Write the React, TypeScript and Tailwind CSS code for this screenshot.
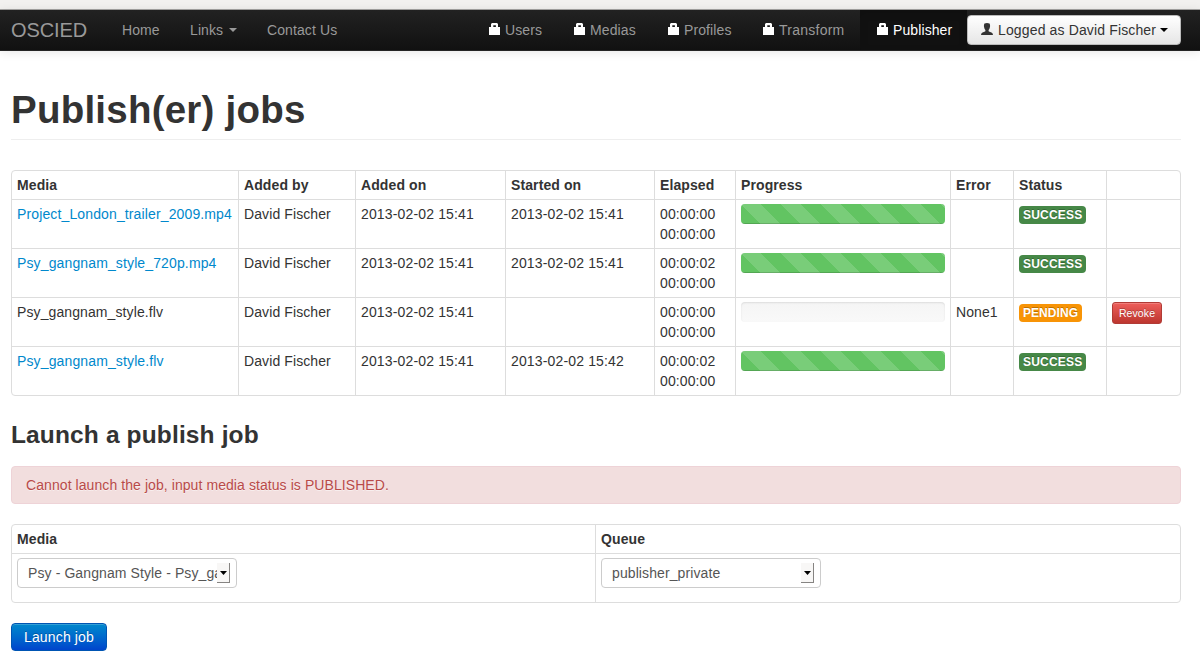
import React from "react";

type Job = {
  media: string;
  link: boolean;
  started: string;
  elapsed: string;
  done: boolean;
  error: string;
};

const jobs: Job[] = [
  { media: "Project_London_trailer_2009.mp4", link: true, started: "2013-02-02 15:41", elapsed: "00:00:00", done: true, error: "" },
  { media: "Psy_gangnam_style_720p.mp4", link: true, started: "2013-02-02 15:41", elapsed: "00:00:02", done: true, error: "" },
  { media: "Psy_gangnam_style.flv", link: false, started: "", elapsed: "00:00:00", done: false, error: "None1" },
  { media: "Psy_gangnam_style.flv", link: true, started: "2013-02-02 15:42", elapsed: "00:00:02", done: true, error: "" },
];

const headings = ["Media", "Added by", "Added on", "Started on", "Elapsed", "Progress", "Error", "Status", ""];
const columns = "grid grid-cols-[226px_117px_150px_149px_81px_215px_63px_93px_74px]";

function Lock() {
  return (
    <svg width="11" height="12" viewBox="0 0 11 12" className="block shrink-0">
      <path fill="#fff" d="M3 0H8L9 1V4H11V12H0V4H2V1ZM4.3 2.2V4H6.9V2.2Z" fillRule="evenodd" />
    </svg>
  );
}

function Person() {
  return (
    <svg width="12" height="12" viewBox="0 0 12 12" className="block shrink-0">
      <path fill="#333" d="M3.5 0.6Q6 -0.6 8.5 0.6Q9.4 2 8.9 4.2Q8.5 6.1 7.6 7V8.3Q8 8.9 10.5 9.4Q12 10 12 12H0Q0 10 1.5 9.4Q4 8.9 4.4 8.3V7Q3.5 6.1 3.1 4.2Q2.6 2 3.5 0.6Z" />
    </svg>
  );
}

function Caret({ color }: { color: string }) {
  return (
    <svg width="8" height="4" viewBox="0 0 8 4" className="block shrink-0">
      <path fill={color} d="M0 0H8L4 4Z" />
    </svg>
  );
}

function AdminLink({ label, width, active = false }: { label: string; width: string; active?: boolean }) {
  const tone = active ? "bg-[#111] text-white shadow-[inset_0_3px_8px_rgba(0,0,0,0.125)]" : "text-[#999]";
  return (
    <a className={`${tone} ${width} flex h-10 items-center gap-[5px] pl-[17px]`}>
      <span className="-mt-0.5"><Lock /></span>
      {label}
    </a>
  );
}

function Cell({ children, first = false }: { children?: React.ReactNode; first?: boolean }) {
  return <div className={first ? "whitespace-nowrap px-[5px] pt-1" : "whitespace-nowrap border-l border-[#ddd] px-[5px] pt-1"}>{children}</div>;
}

function Progress({ done }: { done: boolean }) {
  return (
    <div className="h-5 w-[204px] overflow-hidden rounded bg-linear-to-b from-[#f5f5f5] to-[#f9f9f9] shadow-[inset_0_1px_2px_rgba(0,0,0,0.1)]">
      {done && (
        <div className="h-full bg-[#62c462] bg-[linear-gradient(45deg,rgba(255,255,255,0.15)_25%,transparent_25%,transparent_50%,rgba(255,255,255,0.15)_50%,rgba(255,255,255,0.15)_75%,transparent_75%,transparent)] bg-size-[40px_40px] shadow-[inset_0_-1px_0_rgba(0,0,0,0.15)]" />
      )}
    </div>
  );
}

function Badge({ done }: { done: boolean }) {
  const tone = done ? "bg-[#468847] tracking-[0.2px] w-[67px]" : "bg-[#f89406] tracking-[0.05px] w-[63px]";
  return (
    <span className={`${tone} mt-0.5 block h-[18px] rounded pl-1 text-[12px] font-bold leading-[18px] text-white [text-shadow:0_-1px_0_rgba(0,0,0,0.25)]`}>
      {done ? "SUCCESS" : "PENDING"}
    </span>
  );
}

function Select({ value }: { value: string }) {
  return (
    <div className="flex h-[30px] w-[220px] items-center rounded border border-[#ccc] bg-white pl-2.5 pr-1.5 text-[#555]">
      <span className="min-w-0 flex-1 overflow-hidden whitespace-nowrap">{value}</span>
      <span className="flex h-5 w-[13px] shrink-0 items-center justify-center bg-[#f8f7f6] shadow-[inset_-1px_-1px_0_#868482]">
        <svg width="7" height="4" viewBox="0 0 7 4"><path d="M0 0H7L3.5 4Z" fill="#000" /></svg>
      </span>
    </div>
  );
}

export default function App() {
  return (
    <div className="h-[669px] w-[1200px] overflow-hidden bg-white font-['Liberation_Sans',Arial,sans-serif] text-[14px] leading-5 tracking-[0.1px] text-[#333]">
      <div className="h-[10px] border-b border-[#a5a4a2] bg-[#f2f1ef]" />
      <nav className="flex h-[41px] justify-between border-b border-[#252525] bg-linear-to-b from-[#222] to-[#111] pl-[11px] pr-[19px] shadow-[0_1px_10px_rgba(0,0,0,0.1)]">
        <div className="flex h-10 items-center text-[#999]">
          <a className="w-[96px] text-[20px] tracking-[-0.1px]">OSCIED</a>
          <a className="w-[68px] pl-[15px]">Home</a>
          <a className="flex w-[62px] items-center justify-between pl-[15px]">
            Links<Caret color="#999" />
          </a>
          <a className="ml-[15px] pl-[15px]">Contact Us</a>
        </div>
        <div className="flex">
          <AdminLink label="Users" width="w-[85px]" />
          <AdminLink label="Medias" width="w-[94px]" />
          <AdminLink label="Profiles" width="w-[95px]" />
          <AdminLink label="Transform" width="w-[114px] tracking-[0.25px]" />
          <AdminLink label="Publisher" width="w-[107px]" active />
          <button className="mt-[5px] flex h-[30px] w-[214px] items-center rounded border border-[#bbb] bg-linear-to-b from-white to-[#e6e6e6] pl-[13px] text-[#333]">
            <span className="-mt-0.5 mr-[5px]"><Person /></span>
            <span className="w-[162px] text-left tracking-[0.14px]">Logged as David Fischer</span>
            <Caret color="#000" />
          </button>
        </div>
      </nav>

      <main className="pl-[11px] pr-[19px]">
        <h1 className="mt-[39px] h-[50px] border-b border-[#eee] text-[38.5px] font-bold leading-10 tracking-[0.23px]">Publish(er) jobs</h1>

        <section className="mt-[30px] rounded border border-[#ddd]">
          <div className={`${columns} h-7 font-bold`}>
            {headings.map((h, i) => <Cell key={i} first={i === 0}>{h}</Cell>)}
          </div>
          {jobs.map((j, i) => (
            <div key={i} className={`${columns} h-[49px] border-t border-[#ddd]`}>
              <Cell first>{j.link ? <a className="tracking-[0.13px] text-[#08c]">{j.media}</a> : j.media}</Cell>
              <Cell>David Fischer</Cell>
              <Cell><span className="tracking-[0.15px]">2013-02-02 15:41</span></Cell>
              <Cell><span className="tracking-[0.15px]">{j.started}</span></Cell>
              <Cell>{j.elapsed}<br />00:00:00</Cell>
              <Cell><Progress done={j.done} /></Cell>
              <Cell>{j.error}</Cell>
              <Cell><Badge done={j.done} /></Cell>
              <Cell>
                {!j.done && (
                  <button className="block h-[22px] w-[50px] rounded-[3px] border border-[#b13b36] bg-linear-to-b from-[#ee5f5b] to-[#bd362f] text-[10.5px] leading-5 text-white shadow-[inset_0_1px_0_rgba(255,255,255,0.2)] [text-shadow:0_-1px_0_rgba(0,0,0,0.25)]">
                    Revoke
                  </button>
                )}
              </Cell>
            </div>
          ))}
        </section>

        <h2 className="mt-5 text-[24.5px] font-bold leading-[38px] tracking-[0.14px]">Launch a publish job</h2>

        <div className="mt-3 h-[38px] rounded border border-[#eed3d7] bg-[#f2dede] px-3.5 py-2 tracking-[0.075px] text-[#b94a48] [text-shadow:0_1px_0_rgba(255,255,255,0.5)]">
          Cannot launch the job, input media status is PUBLISHED.
        </div>

        <section className="mt-5 rounded border border-[#ddd]">
          <div className="grid h-7 grid-cols-[583px_585px] font-bold">
            <Cell first>Media</Cell>
            <Cell>Queue</Cell>
          </div>
          <div className="grid h-[49px] grid-cols-[583px_585px] border-t border-[#ddd]">
            <Cell first><Select value="Psy - Gangnam Style - Psy_gangnam_style.flv" /></Cell>
            <Cell><Select value="publisher_private" /></Cell>
          </div>
        </section>

        <button className="mt-5 block h-7 w-24 rounded border border-[#0055b3] bg-linear-to-b from-[#08c] to-[#04c] leading-[26px] tracking-[0.15px] text-white shadow-[inset_0_1px_0_rgba(255,255,255,0.2)] [text-shadow:0_-1px_0_rgba(0,0,0,0.25)]">
          Launch job
        </button>
      </main>
    </div>
  );
}
